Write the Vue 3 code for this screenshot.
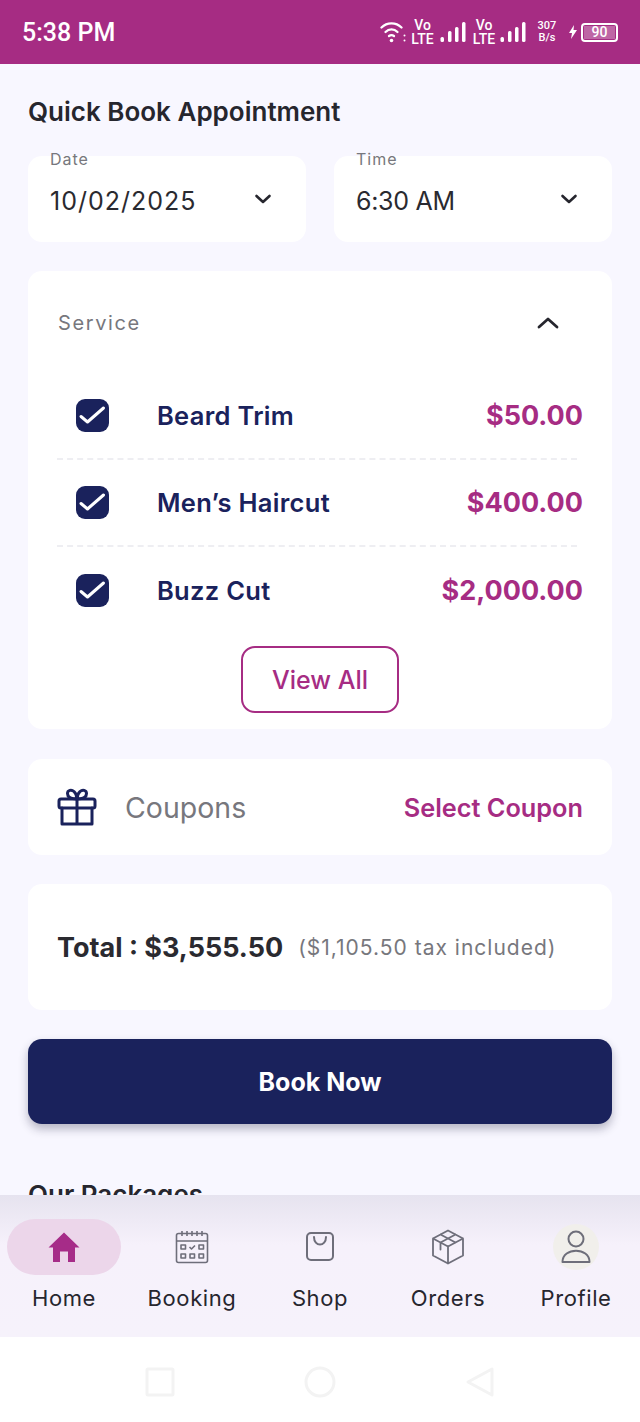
<script setup>
const services = [
  { name: "Beard Trim", price: "$50.00" },
  { name: "Men’s Haircut", price: "$400.00" },
  { name: "Buzz Cut", price: "$2,000.00" },
];
const fields = [
  { label: "Date", value: "10/02/2025" },
  { label: "Time", value: "6:30 AM", narrow: true },
];
</script>

<template>
  <div class="phone">
    <header class="status">
      <span class="clock">5:38 PM</span>
      <div class="status-icons">
        <svg class="wifi" width="26" height="24" viewBox="0 0 26 24" fill="none" stroke="#fff" stroke-width="2.300" stroke-linecap="round">
          <path d="M1.500 7.500C7 2 16 2 21.500 7.500" />
          <path d="M5.500 12C9 8.500 14 8.500 17.500 12" />
          <path d="M9 16C10.500 15 12.500 15 14 16" />
          <circle cx="11.500" cy="20.500" r="1.800" fill="#fff" stroke="none" />
          <circle cx="24.500" cy="15.500" r="1" fill="#fff" stroke="none" />
          <circle cx="24.500" cy="20.500" r="1" fill="#fff" stroke="none" />
        </svg>
        <span class="volte"><b>Vo</b><b>LTE</b></span>
        <svg class="bars" width="26" height="22" viewBox="0 0 26 22" fill="#fff">
          <rect x="0.500" y="16" width="3.500" height="5" rx="1.500" />
          <rect x="8" y="10" width="3.500" height="11" rx="1.500" />
          <rect x="15" y="6" width="3.500" height="15" rx="1.500" />
          <rect x="22" y="1" width="3.500" height="20" rx="1.500" />
        </svg>
        <span class="volte second"><b>Vo</b><b>LTE</b></span>
        <svg class="bars" width="26" height="22" viewBox="0 0 26 22" fill="#fff">
          <rect x="0.500" y="16" width="3.500" height="5" rx="1.500" />
          <rect x="8" y="10" width="3.500" height="11" rx="1.500" />
          <rect x="15" y="6" width="3.500" height="15" rx="1.500" />
          <rect x="22" y="1" width="3.500" height="20" rx="1.500" />
        </svg>
        <span class="speed"><b>307</b><b>B/s</b></span>
        <svg class="bolt" width="10" height="14" viewBox="0 0 10 14" fill="#fff">
          <path d="M6 0 1 8h3l-1 6 6-9H5.500z" />
        </svg>
        <div class="battery"><span class="battery-level">90</span></div>
      </div>
    </header>

    <main class="content">
      <h1 class="title">Quick Book Appointment</h1>

      <div class="fields">
        <div v-for="f in fields" :key="f.label" class="field">
          <span class="field-label">{{ f.label }}</span>
          <span class="field-value" :class="{ narrow: f.narrow }">{{ f.value }}</span>
          <svg class="field-chevron" width="18" height="12" viewBox="0 0 18 12" fill="none" stroke="#26262e" stroke-width="2.600" stroke-linecap="round" stroke-linejoin="round">
            <path d="M2.500 3 9 9l6.500-6" />
          </svg>
        </div>
      </div>

      <section class="card service">
        <div class="service-head">
          <span>Service</span>
          <svg width="22" height="14" viewBox="0 0 22 14" fill="none" stroke="#26262e" stroke-width="2.800" stroke-linecap="round" stroke-linejoin="round">
            <path d="M2 11 11 3l9 8" />
          </svg>
        </div>
        <ul class="rows">
          <li v-for="s in services" :key="s.name" class="row">
            <span class="check">
              <svg width="33" height="33" viewBox="0 0 33 33" fill="none" stroke="#fff" stroke-width="3" stroke-linecap="round" stroke-linejoin="round">
                <path d="M5 17.500 11.500 23 27.500 9" />
              </svg>
            </span>
            <span class="row-name">{{ s.name }}</span>
            <span class="row-price">{{ s.price }}</span>
          </li>
        </ul>
        <button class="view-all">View All</button>
      </section>

      <section class="card coupons">
        <svg width="40" height="38" viewBox="0 0 40 38" fill="none" stroke="#1a225c" stroke-width="3" stroke-linecap="round" stroke-linejoin="round">
          <path d="M20 11C14 11 10.500 9 10.500 5.500 10.500 2 14.500 1.200 17 3.500 19 5.500 20 8 20 11ZM20 11C26 11 29.500 9 29.500 5.500 29.500 2 25.500 1.200 23 3.500 21 5.500 20 8 20 11Z" />
          <rect x="2" y="11" width="36" height="9" rx="2" />
          <path d="M5 20v16h30V20M20 11v25" />
        </svg>
        <span class="coupons-label">Coupons</span>
        <span class="coupons-link">Select Coupon</span>
      </section>

      <section class="card total">
        <strong>Total : $3,555.50</strong>
        <span>($1,105.50 tax included)</span>
      </section>

      <button class="book">Book Now</button>

      <h2 class="packages">Our Packages</h2>
    </main>

    <nav class="tabs">
      <div class="tab">
        <span class="tab-icon active">
          <svg width="34" height="32" viewBox="0 0 34 32" fill="#a62c88">
            <path d="M17 1.500 1.500 16.500h4.500V31h7V20.500h8V31h7V16.500h4.500z" />
          </svg>
        </span>
        <span class="tab-label">Home</span>
      </div>
      <div class="tab">
        <span class="tab-icon">
          <svg width="34" height="34" viewBox="0 0 34 34" fill="none" stroke="#6e6e7a" stroke-width="1.600" stroke-linejoin="round">
            <rect x="1.500" y="3.500" width="31" height="29" rx="2" />
            <path d="M1.500 11h31M7 1v5M12 1v5M17 1v5M22 1v5M27 1v5" />
            <rect x="6" y="15" width="4.500" height="4" />
            <path d="m14.500 17 2 2 3.500-3.500" />
            <rect x="24" y="15" width="4.500" height="4" />
            <rect x="6" y="24" width="4.500" height="4" />
            <rect x="15" y="24" width="4.500" height="4" />
            <rect x="24" y="24" width="4.500" height="4" />
          </svg>
        </span>
        <span class="tab-label">Booking</span>
      </div>
      <div class="tab">
        <span class="tab-icon">
          <svg width="32" height="32" viewBox="0 0 32 32" fill="none" stroke="#6e6e7a" stroke-width="2" stroke-linecap="round">
            <rect x="3" y="2" width="26" height="27" rx="4" />
            <path d="M10 6c0 10 12 10 12 0" />
          </svg>
        </span>
        <span class="tab-label">Shop</span>
      </div>
      <div class="tab">
        <span class="tab-icon">
          <svg width="34" height="36" viewBox="0 0 34 36" fill="none" stroke="#6e6e7a" stroke-width="1.800" stroke-linejoin="round" stroke-linecap="round">
            <path d="M17 1.500 32 9.500v17L17 34.500 2 26.500v-17zM2 9.500l15 8 15-8M17 17.500v17M9.500 5.500l15 8M24.500 5.500l-15 8v7" />
          </svg>
        </span>
        <span class="tab-label">Orders</span>
      </div>
      <div class="tab">
        <span class="tab-icon">
          <span class="avatar">
            <svg width="30" height="34" viewBox="0 0 30 34" fill="none" stroke="#6e6e7a" stroke-width="2" stroke-linejoin="round">
              <circle cx="15" cy="9" r="7.500" />
              <path d="M1.500 32c0-15 27-15 27 0z" />
            </svg>
          </span>
        </span>
        <span class="tab-label">Profile</span>
      </div>
    </nav>

    <footer class="sysnav">
      <svg width="30" height="30" viewBox="0 0 30 30" fill="none" stroke="#f3f3f3" stroke-width="3">
        <rect x="2" y="2" width="26" height="26" rx="1" />
      </svg>
      <svg width="32" height="32" viewBox="0 0 32 32" fill="none" stroke="#f3f3f3" stroke-width="3">
        <circle cx="16" cy="16" r="14" />
      </svg>
      <svg width="30" height="32" viewBox="0 0 30 32" fill="none" stroke="#f3f3f3" stroke-width="3" stroke-linejoin="round">
        <path d="M27 3v26L3 16z" />
      </svg>
    </footer>
  </div>
</template>

<style>
html, body { margin: 0; padding: 0; background: #fff; }
</style>

<style scoped>
* { box-sizing: border-box; }
.phone {
  width: 640px;
  height: 1422px;
  display: flex;
  flex-direction: column;
  font-family: Inter, "Noto Sans", sans-serif;
  color: #26262e;
  overflow: hidden;
}
.status {
  flex: 0 0 64px;
  background: #a62c83;
  color: #fff;
  display: flex;
  align-items: center;
  justify-content: space-between;
  padding: 0 22px;
}
.clock { font-size: 25px; font-weight: 500; font-family: Roboto, sans-serif; }
.status-icons { display: flex; align-items: center; }
.wifi { margin-right: 4px; }
.volte, .speed {
  display: flex;
  flex-direction: column;
  align-items: center;
  font-family: Roboto, sans-serif;
}
.volte { font-size: 14px; line-height: 14px; width: 25px; margin-right: 5px; }
.volte.second { width: 24px; margin-left: 6px; margin-right: 4px; }
.volte b, .speed b { font-weight: 500; }
.speed { font-size: 11px; line-height: 12px; width: 20px; margin-left: 11px; margin-right: 11px; }
.bolt { margin-right: 3px; }
.battery {
  width: 37px;
  height: 19px;
  border: 2px solid #fff;
  border-radius: 4px;
  padding: 1px;
  display: flex;
}
.battery-level {
  flex: 1;
  background: rgba(255, 255, 255, 0.28);
  font: 500 14px/13px Roboto, sans-serif;
  text-align: center;
}
.content {
  flex: 1;
  min-height: 0;
  overflow: hidden;
  background: #f8f7ff;
  padding: 31px 28px 0;
  display: flex;
  flex-direction: column;
}
.title {
  margin: 0;
  font-size: 26px;
  line-height: 34px;
  font-weight: 600;
  flex: none;
}
.fields {
  flex: none;
  display: grid;
  grid-template-columns: 278px 278px;
  gap: 28px;
  margin-top: 27px;
}
.field {
  position: relative;
  height: 86px;
  background: #fff;
  border-radius: 14px;
  display: flex;
  align-items: center;
  justify-content: space-between;
  padding: 3px 34px 0 22px;
}
.field-label {
  position: absolute;
  left: 22px;
  top: -6px;
  font-size: 16px;
  line-height: 18px;
  letter-spacing: 1px;
  color: #77777d;
}
.field-value { font-size: 25px; letter-spacing: 1px; color: #2a2a30; }
.field-value.narrow { letter-spacing: -0.3px; }
.field-chevron { margin-top: -4px; }
.card {
  flex: none;
  background: #fff;
  border-radius: 14px;
}
.service {
  margin-top: 29px;
  height: 458px;
  padding: 0 29px;
  display: flex;
  flex-direction: column;
}
.service-head {
  height: 102px;
  flex: none;
  display: flex;
  align-items: center;
  justify-content: space-between;
  padding: 2px 24px 0 1px;
  font-size: 20px;
  letter-spacing: 1.600px;
  color: #77777d;
}
.rows { list-style: none; margin: 0; padding: 0; flex: none; }
.row {
  height: 87px;
  display: flex;
  align-items: center;
  border-bottom: 2px dashed #eeeef2;
  margin-right: 6px;
}
.row:last-child { border-bottom: none; }
.check {
  width: 33px;
  height: 33px;
  margin-left: 19px;
  background: #1a225c;
  border-radius: 9px;
  display: flex;
  align-items: center;
  justify-content: center;
  flex: none;
}
.row-name {
  margin-left: 48px;
  font-size: 25.500px;
  letter-spacing: 0.300px;
  font-weight: 600;
  color: #1a225c;
  flex: 1;
}
.row-price {
  font-size: 27px;
  font-weight: 700;
  color: #a62c83;
  margin-right: -6px;
}
.view-all {
  flex: none;
  align-self: center;
  margin-top: 12px;
  width: 158px;
  height: 67px;
  background: #fff;
  border: 2px solid #a62c83;
  border-radius: 14px;
  color: #a62c83;
  font: 500 25px Inter, sans-serif;
}
.coupons {
  margin-top: 30px;
  height: 96px;
  display: flex;
  align-items: center;
  padding: 0 29px;
}
.coupons-label {
  margin-left: 28px;
  flex: 1;
  font-size: 28.500px;
  color: #77777d;
}
.coupons-link { font-size: 25.300px; font-weight: 600; color: #a62c83; }
.total {
  margin-top: 29px;
  height: 126px;
  display: flex;
  align-items: center;
  padding: 0 29px;
  gap: 15px;
}
.total strong { font-size: 27px; font-weight: 700; color: #2a2a30; }
.total span { font-size: 21px; letter-spacing: 1px; color: #77777d; }
.book {
  flex: none;
  margin-top: 29px;
  height: 85px;
  border: 0;
  border-radius: 14px;
  background: #1a225c;
  color: #fff;
  font: 700 25px Inter, sans-serif;
  box-shadow: 0 5px 10px rgba(30, 30, 60, 0.3);
}
.packages {
  flex: none;
  margin: 54px 0 0;
  font-size: 26px;
  line-height: 34px;
  font-weight: 600;
}
.tabs {
  flex: 0 0 142px;
  background: linear-gradient(180deg, #e6e3ef 0, #f6f1fb 50px, #f6f2fb 100%);
  display: grid;
  grid-template-columns: repeat(5, 128px);
  padding-top: 24px;
}
.tab {
  display: flex;
  flex-direction: column;
  align-items: center;
}
.tab-icon {
  width: 114px;
  height: 56px;
  border-radius: 28px;
  display: flex;
  align-items: center;
  justify-content: center;
}
.tab-icon.active { background: #ecd6ea; }
.avatar {
  width: 46px;
  height: 46px;
  border-radius: 50%;
  background: #f1efeb;
  display: flex;
  align-items: center;
  justify-content: center;
}
.tab-label {
  margin-top: 8px;
  font-size: 22px;
  line-height: 30px;
  letter-spacing: 0.600px;
  color: #26262e;
}
.sysnav {
  flex: 0 0 85px;
  background: #fff;
  padding-top: 4px;
  display: grid;
  grid-template-columns: repeat(3, 160px);
  justify-content: center;
  justify-items: center;
  align-items: center;
}
</style>
